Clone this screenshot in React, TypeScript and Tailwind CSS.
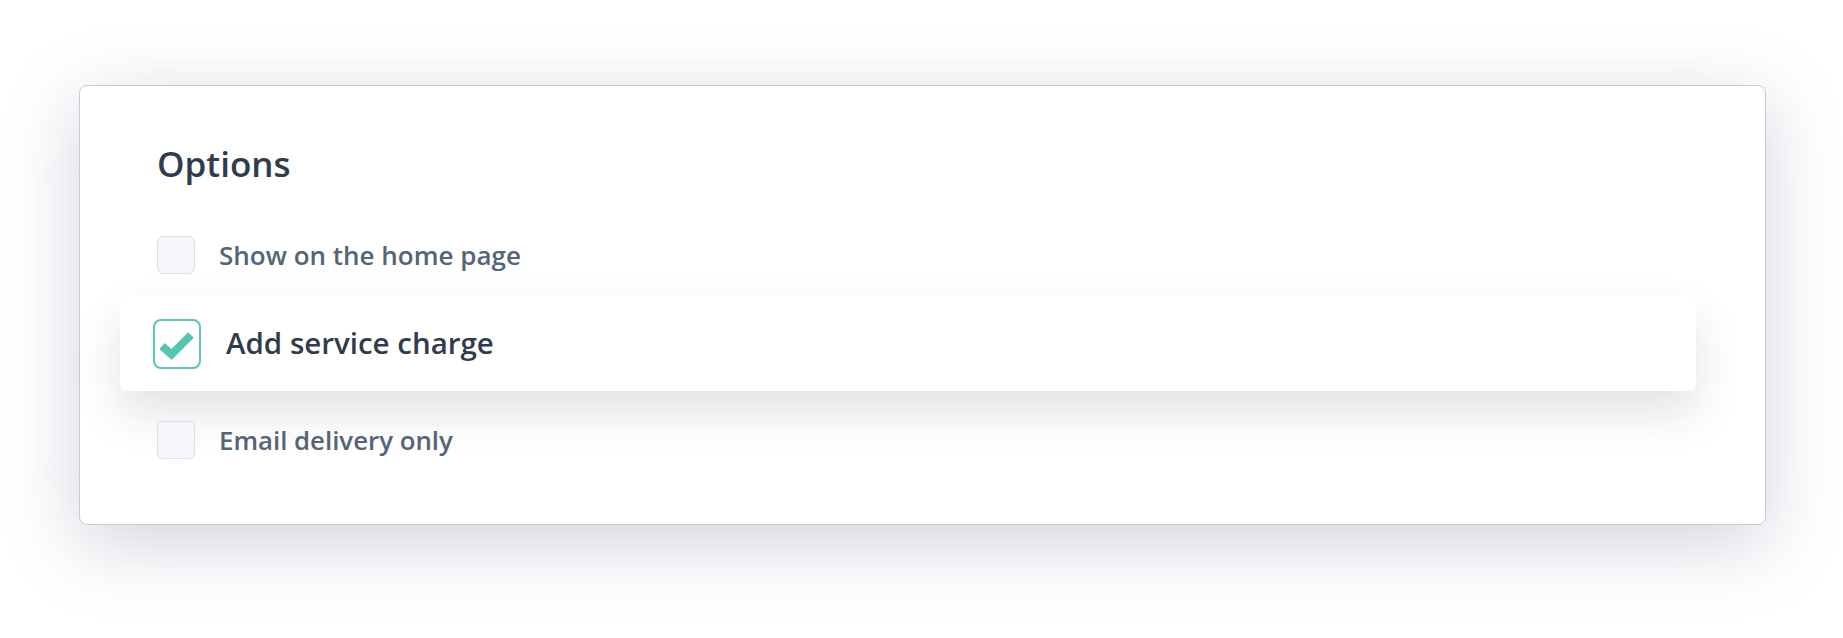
import React from "react";

function EmptyBox() {
  return (
    <span className="block w-[38px] h-[38px] shrink-0 rounded-[6px] border-[1.5px] border-[#d9e1ea] bg-[#f4f6f9]" />
  );
}

export default function App() {
  return (
    <div className="w-[1843px] h-[638px] bg-white overflow-hidden pt-[85px] pl-[79px] font-['Open_Sans',_'Noto_Sans',_sans-serif]">
      <div className="w-[1687px] h-[440px] bg-white border border-[#c6ccd5] rounded-[8px] shadow-[0_18px_75px_rgba(71,85,120,0.25)] pl-[77px] pr-[69px] pt-[58px]">
        <h2 className="text-[35px] leading-[40px] font-semibold text-[#2f3c4b]">Options</h2>
        <div className="mt-[52px] flex items-center h-[38px]">
          <EmptyBox />
          <span className="ml-[24px] text-[26px] font-semibold text-[#556476]">Show on the home page</span>
        </div>
        <div className="mt-[22px] -ml-[37px] h-[95px] bg-white rounded-[7px] shadow-[0_22px_45px_rgba(30,41,59,0.13)] flex items-center pl-[33px]">
          <span className="flex items-center justify-center w-[48px] h-[50px] shrink-0 rounded-[8px] border-2 border-[#5ec6b4] bg-white">
            <svg width="44" height="46" viewBox="0 0 44 46">
              <path d="M7 25 L16.5 33.5 L36 14" fill="none" stroke="#56c5b2" strokeWidth="8" strokeLinejoin="miter" strokeLinecap="butt" />
            </svg>
          </span>
          <span className="ml-[25px] text-[29.5px] font-semibold text-[#2f3c4b]">Add service charge</span>
        </div>
        <div className="mt-[30px] flex items-center h-[38px]">
          <EmptyBox />
          <span className="ml-[24px] text-[25.8px] font-semibold text-[#556476]">Email delivery only</span>
        </div>
      </div>
    </div>
  );
}
